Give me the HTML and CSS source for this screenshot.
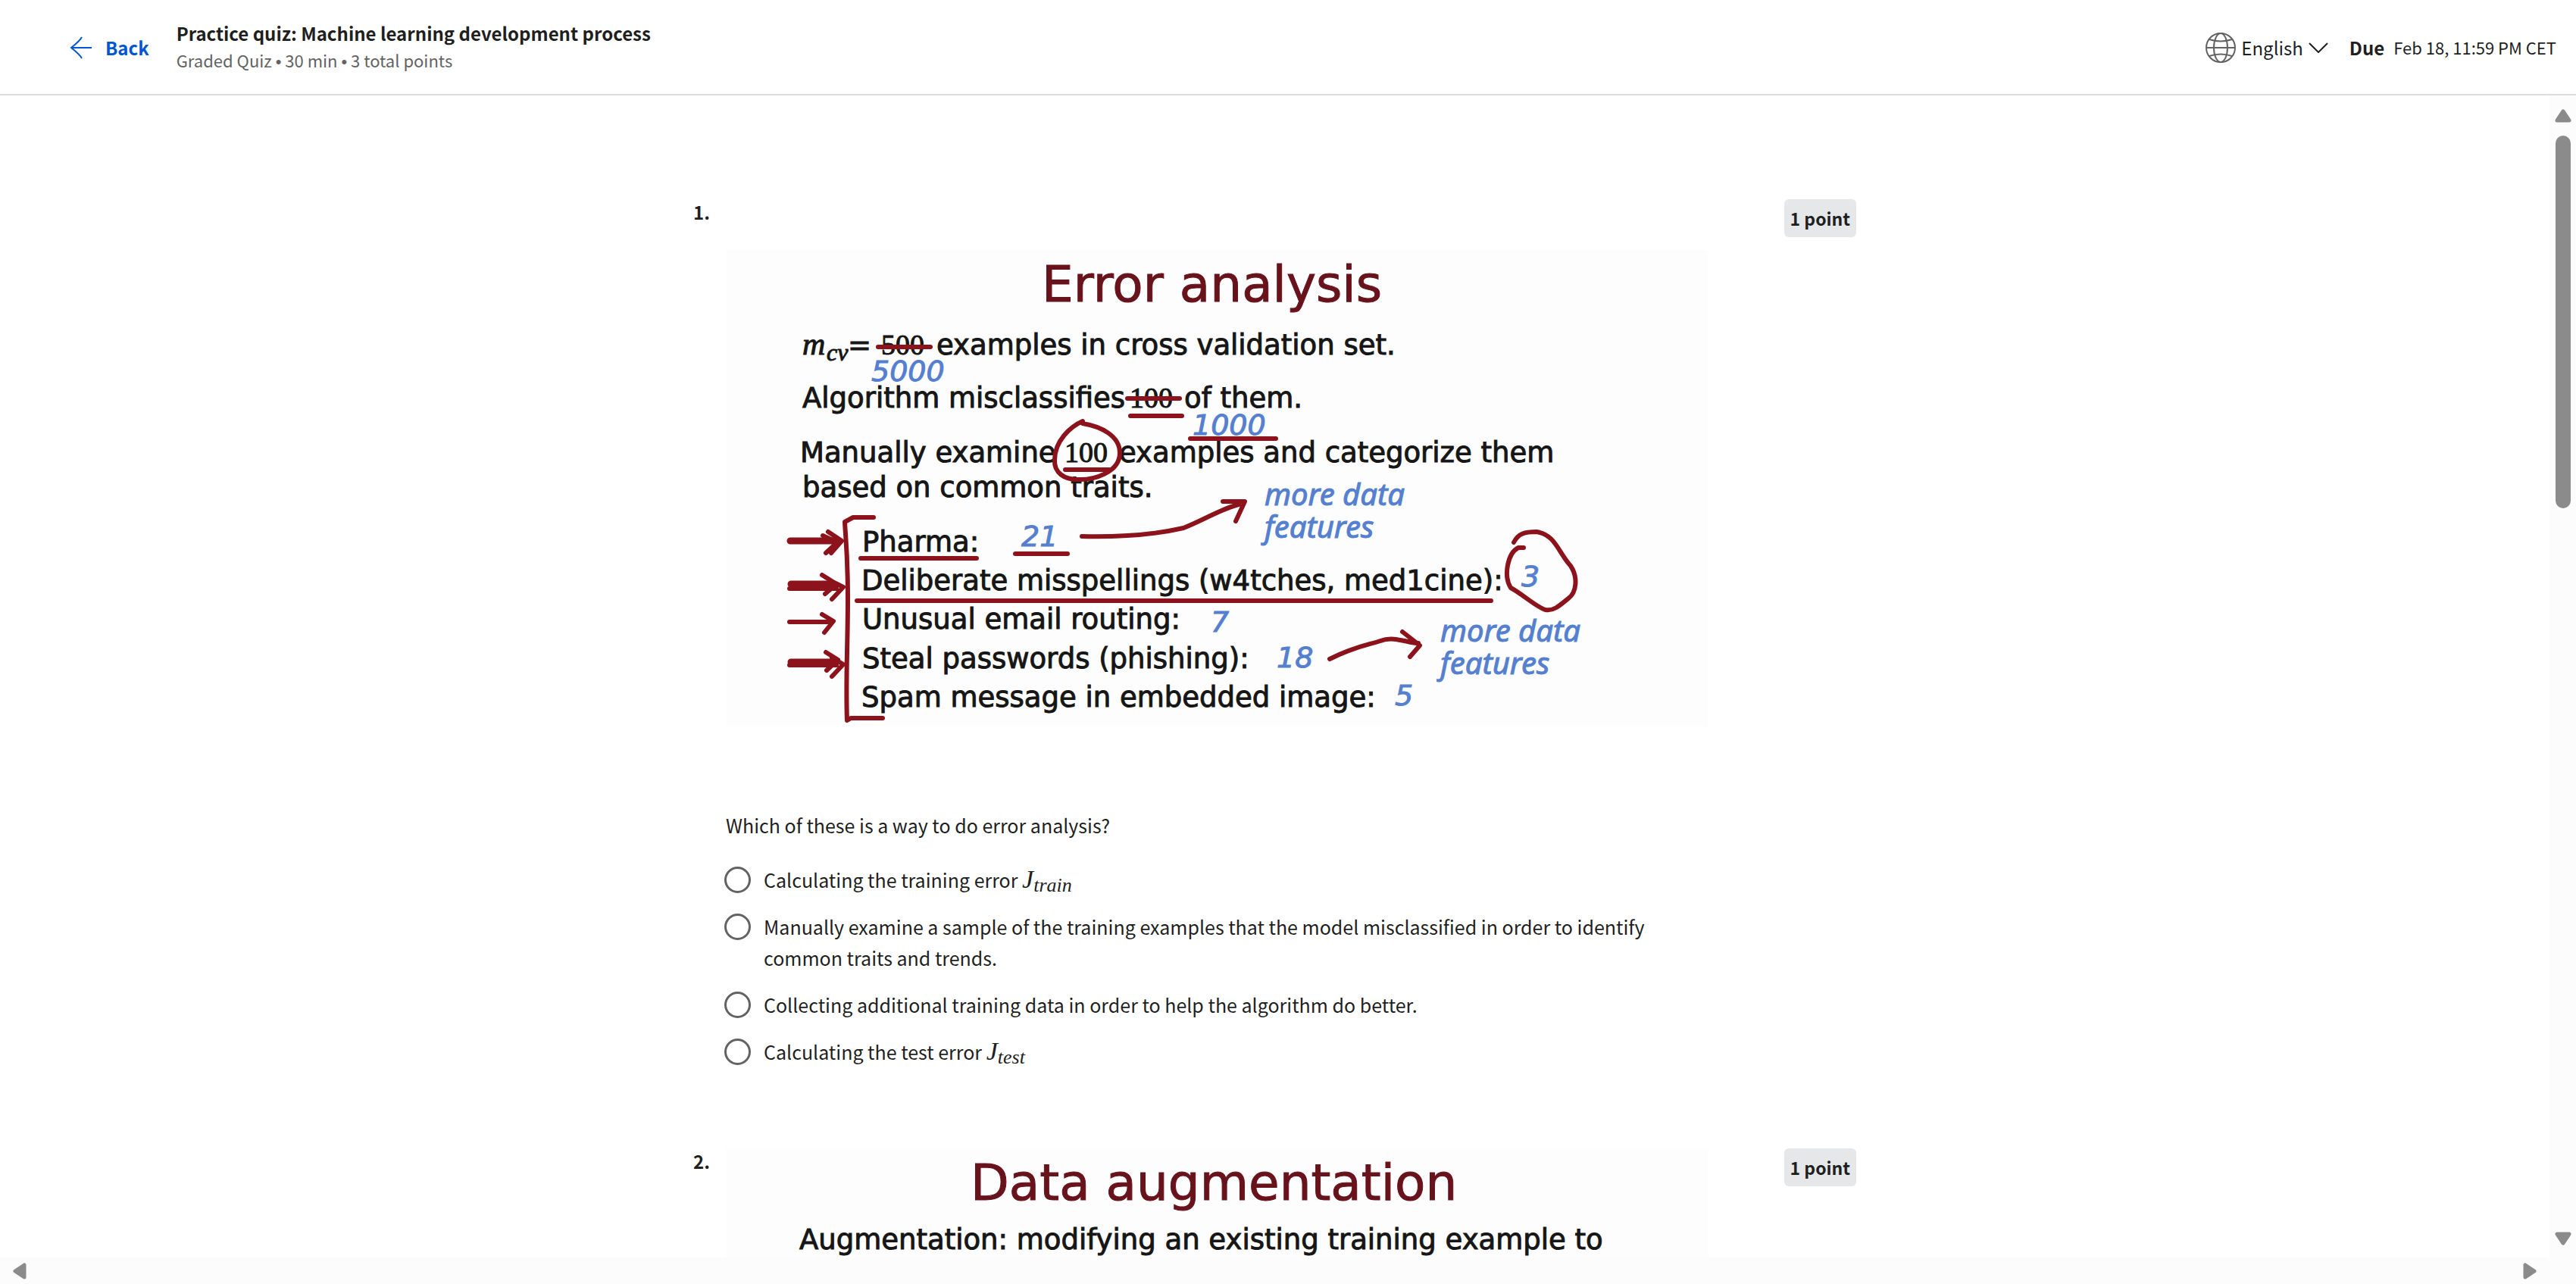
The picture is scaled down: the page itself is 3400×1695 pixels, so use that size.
FILE: index.html
```html
<!DOCTYPE html>
<html lang="en">
<head>
<meta charset="utf-8">
<meta name="viewport" content="width=device-width, initial-scale=1">
<title>Practice quiz: Machine learning development process</title>
<link rel="stylesheet" href="styles.css">
</head>
<body>
<div class="app">
  <header class="topbar">
    <a class="back" href="#">
      <svg class="back-icon" viewBox="0 0 30 30" aria-hidden="true"><path d="M29 15H2M16 1C14 5 7 11 2 15C7 19 14 25 16 29"/></svg>
      <span>Back</span>
    </a>
    <div class="quiz-heading">
      <h1 class="quiz-title">Practice quiz: Machine learning development process</h1>
      <p class="quiz-meta">Graded Quiz <span class="dot">•</span> 30 min <span class="dot">•</span> 3 total points</p>
    </div>
    <div class="topbar-side">
      <button class="language" type="button">
        <svg class="globe" viewBox="0 0 40 40" aria-hidden="true"><circle cx="20" cy="20" r="19"/><ellipse cx="20" cy="20" rx="9" ry="19"/><path d="M1 20H39M5 9Q20 14 35 9M5 31Q20 26 35 31"/></svg>
        <span>English</span>
        <svg class="chevron" viewBox="0 0 26 14" aria-hidden="true"><path d="M1 1L13 13L25 1"/></svg>
      </button>
      <p class="due"><strong class="due-label">Due</strong><span class="due-date">Feb 18, 11:59 PM CET</span></p>
    </div>
  </header>

  <main class="content">
    <section class="question">
      <h2 class="number">1.</h2>
      <div class="body body-first">
        <svg class="slide" viewBox="0 0 1297 629" role="img" aria-label="Error analysis slide">
          <text class="slide-title" x="417" y="68">Error analysis</text>
          <g class="slide-text">
            <text class="math" x="101" y="138">m</text>
            <text class="math-sub" x="133" y="146">cv</text>
            <text x="161" y="138">=</text>
            <text class="serif" x="205" y="138">500</text>
            <text x="278" y="138">examples in cross validation set.</text>
            <text x="101" y="208">Algorithm misclassifies</text>
            <text class="serif" x="533" y="208">100</text>
            <text x="605" y="208">of them.</text>
            <text x="98" y="280">Manually examine</text>
            <text class="serif" x="447" y="280">100</text>
            <text x="519" y="280">examples and categorize them</text>
            <text x="101" y="326">based on common traits.</text>
            <text x="180" y="398">Pharma:</text>
            <text x="179" y="449">Deliberate misspellings (w4tches, med1cine):</text>
            <text x="180" y="500">Unusual email routing:</text>
            <text x="180" y="552">Steal passwords (phishing):</text>
            <text x="179" y="603">Spam message in embedded image:</text>
          </g>
          <g class="ink-text">
            <text class="ink-digits" x="192" y="173">5000</text>
            <text class="ink-digits" x="616" y="244">1000</text>
            <text x="711" y="337">more data</text>
            <text x="711" y="380">features</text>
            <text class="ink-digits" x="390" y="391">21</text>
            <text class="ink-digits" x="1050" y="444">3</text>
            <text class="ink-digits" x="640" y="504">7</text>
            <text class="ink-digits" x="727" y="551">18</text>
            <text x="943" y="517">more data</text>
            <text x="943" y="560">features</text>
            <text class="ink-digits" x="883" y="601">5</text>
          </g>
          <g class="ink-line">
            <path d="M201 128H270M530 196H599M534 219H602M613 249H726M448 290H506"/>
            <path d="M471 226C455 233 434 252 434 277C433 295 448 303 464 303C485 304 520 294 520 268C520 245 495 233 471 229"/>
            <path d="M178 407H331M382 401H451M173 463H1010"/>
            <path d="M470 378C520 379 565 376 604 367C630 357 655 341 677 336M656 332H685L673 358"/>
            <path d="M797 540C830 523 850 521 864 516C882 509 900 519 914 519M893 504L916 522L903 537"/>
            <path d="M1040 386C1046 374 1055 372 1070 372C1095 376 1098 398 1115 417C1125 432 1123 452 1112 460C1100 470 1092 477 1082 475C1070 472 1050 453 1036 446C1026 430 1032 400 1046 393H1053"/>
            <path d="M195 353H168L157 359C158 380 161 400 161 460C161 520 158 570 160 621L165 618H207"/>
            <path class="thick" d="M85 384H142M86 544H142M86 441H142"/>
            <path d="M128 377L147 386L132 400M135 372L153 384L139 400M84 447H146M127 429L146 441L131 454M137 436L155 445L140 461M84 491H138M127 481L142 490L130 505M84 548H146M132 531L148 541L133 555M140 538L155 547L140 563"/>
          </g>
        </svg>
        <p class="prompt" id="q1">Which of these is a way to do error analysis?</p>
        <div class="options" role="radiogroup" aria-labelledby="q1">
          <label class="option"><input class="radio" type="radio" name="q1"><span>Calculating the training error <i class="formula">J<sub class="formula-sub">train</sub></i></span></label>
          <label class="option"><input class="radio" type="radio" name="q1"><span>Manually examine a sample of the training examples that the model misclassified in order to identify common traits and trends.</span></label>
          <label class="option"><input class="radio" type="radio" name="q1"><span>Collecting additional training data in order to help the algorithm do better.</span></label>
          <label class="option"><input class="radio" type="radio" name="q1"><span>Calculating the test error <i class="formula">J<sub class="formula-sub">test</sub></i></span></label>
        </div>
      </div>
      <span class="points">1 point</span>
    </section>

    <section class="question">
      <h2 class="number">2.</h2>
      <div class="body">
        <svg class="slide" viewBox="0 0 1297 629" role="img" aria-label="Data augmentation slide">
          <text class="slide-title" x="323" y="68">Data augmentation</text>
          <g class="slide-text"><text x="97" y="133">Augmentation: modifying an existing training example to</text></g>
        </svg>
      </div>
      <span class="points">1 point</span>
    </section>
  </main>

  <div class="scroll-y" aria-hidden="true">
    <svg class="arrow" viewBox="0 0 22 18"><path d="M11 3L19 15H3Z"/></svg>
    <div class="track"><div class="thumb"></div></div>
    <svg class="arrow" viewBox="0 0 22 18"><path d="M3 3H19L11 15Z"/></svg>
  </div>
  <div class="scroll-x" aria-hidden="true">
    <svg class="arrow-x" viewBox="0 0 18 22"><path d="M3 11L15 3V19Z"/></svg>
    <svg class="arrow-x" viewBox="0 0 18 22"><path d="M3 3V19L15 11Z"/></svg>
  </div>
</div>
</body>
</html>
```
FILE: styles.css
```css
* { box-sizing: border-box; }

body {
  margin: 0;
  background: #fff;
  color: #1f1f1f;
  font-family: "Noto Sans CJK SC", "Noto Sans", sans-serif;
  font-size: 25px;
  line-height: 41px;
}

h1, h2, p { margin: 0; }

.app {
  display: grid;
  grid-template: auto 1fr auto / 1fr auto;
  height: 100vh;
}

/* Header */
.topbar {
  grid-column: 1 / -1;
  display: flex;
  align-items: center;
  padding: 26px 26px 25px 92px;
  border-bottom: 2px solid #d9dadb;
}
.back {
  display: flex;
  align-items: center;
  gap: 17px;
  color: #0056d2;
  font-size: 24px;
  font-weight: 700;
  text-decoration: none;
}
.back-icon { width: 30px; height: 30px; fill: none; stroke: currentColor; stroke-width: 2; }
.quiz-heading { margin-left: 36px; }
.quiz-title { font-size: 24px; line-height: 36px; font-weight: 700; }
.quiz-meta { font-size: 22px; line-height: 35px; color: #636363; }
.dot { font-family: "Liberation Sans", sans-serif; }
.topbar-side { display: flex; align-items: center; gap: 28px; margin-left: auto; font-size: 24px; }
.language {
  display: flex;
  align-items: center;
  gap: 7px;
  padding: 0;
  border: 0;
  background: none;
  color: inherit;
  font: inherit;
}
.globe { width: 40px; height: 40px; fill: none; stroke: #636363; stroke-width: 2; }
.chevron { width: 26px; height: 14px; fill: none; stroke: #1f1f1f; stroke-width: 2; }
.due { display: flex; align-items: center; gap: 12px; }
.due-date { font-size: 22px; }

/* Questions */
.content {
  min-height: 0;
  padding: 137px 24px 0;
  overflow: auto;
  scrollbar-width: none;
}
.question {
  display: flex;
  align-items: flex-start;
  max-width: 1535px;
  margin: 0 auto 107px;
}
.body { flex: 0 1 1297px; }
.number { flex: 0 0 43px; font-size: 24px; line-height: 34px; font-weight: 700; }
.body-first { padding-top: 67px; }
.points {
  flex: none;
  margin-left: auto;
  padding: 5px 8px;
  border-radius: 6px;
  background: #e5e7e8;
  font-size: 23px;
  line-height: 40px;
  font-weight: 700;
}
.prompt { margin-top: 110px; }
.options { display: grid; gap: 21px; margin-top: 31px; max-width: 1240px; }
.option { display: flex; align-items: flex-start; gap: 17px; }
.radio {
  flex: none;
  appearance: none;
  width: 35px;
  height: 35px;
  margin: 3px 0 0 -2px;
  border: 3px solid #636363;
  border-radius: 50%;
  background: #fff;
}
.formula { font-family: "Liberation Serif", serif; font-size: 34px; line-height: 1; }
.formula-sub { font-size: 26px; line-height: 0; vertical-align: -5px; }

/* Lecture slides */
.slide { display: block; width: 100%; background: #fdfdfd; font-family: "DejaVu Sans", sans-serif; }
.slide-title { font-size: 66px; fill: #68121c; stroke: #68121c; }
.slide-text { font-size: 37px; fill: #161616; stroke: #161616; }
.serif { font-family: "Liberation Serif", serif; font-size: 38px; }
.math { font-family: "Liberation Serif", serif; font-style: italic; font-size: 42px; }
.math-sub { font-family: "Liberation Serif", serif; font-style: italic; font-size: 32px; }
.ink-text { font-family: "Noto Sans", sans-serif; font-style: italic; font-size: 40px; fill: #5580cf; stroke: #5580cf; }
.ink-digits { font-family: "DejaVu Sans", sans-serif; font-size: 38px; }
.ink-line path { fill: none; stroke: #8c131b; stroke-width: 6; stroke-linecap: round; stroke-linejoin: round; }
.ink-line .thick { stroke-width: 9; }

/* Scroll bars */
.scroll-y {
  display: flex;
  flex-direction: column;
  align-items: center;
  width: 35px;
  padding: 18px 0 16px 1px;
  background: #fcfcfc;
}
.scroll-x {
  grid-column: 1 / -1;
  display: flex;
  align-items: center;
  justify-content: space-between;
  height: 35px;
  padding: 0 52px 0 17px;
  background: #fcfcfc;
}
.arrow { width: 22px; height: 18px; }
.arrow-x { width: 18px; height: 22px; }
.arrow, .arrow-x { fill: #8b8b8b; stroke: #8b8b8b; stroke-width: 5; stroke-linejoin: round; }
.track { flex: 1; padding-top: 17px; }
.thumb { width: 20px; height: 34%; border-radius: 10px; background: #8b8b8b; }
```
